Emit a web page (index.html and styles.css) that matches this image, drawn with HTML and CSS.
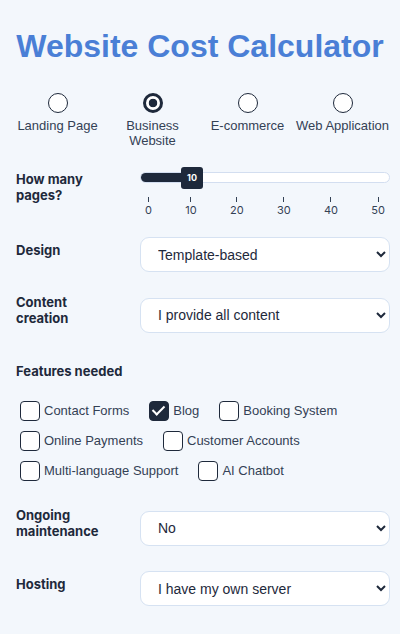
FILE: index.html
```html
<!DOCTYPE html>
<html lang="en">
<head>
    <meta charset="UTF-8">
    <meta name="viewport" content="width=device-width, initial-scale=1.0">
    <title>Website Cost Calculator</title>
    <link rel="stylesheet" href="styles.css">
</head>
<body>
    <div class="calculator">
        <h1>Website Cost Calculator</h1>

        <div class="site-types">
            <label class="site-type">
                <input type="radio" name="type" value="landing">
                <span>Landing Page</span>
            </label>
            <label class="site-type">
                <input type="radio" name="type" value="business" checked>
                <span>Business Website</span>
            </label>
            <label class="site-type">
                <input type="radio" name="type" value="ecommerce">
                <span>E-commerce</span>
            </label>
            <label class="site-type">
                <input type="radio" name="type" value="webapp">
                <span>Web Application</span>
            </label>
        </div>

        <div class="form">
            <div class="field field-slider">
                <div class="field-label">How many pages?</div>
                <div class="slider">
                    <div class="track">
                        <div class="track-fill" style="width: 45px"></div>
                        <div class="thumb" style="left: 40px">10</div>
                    </div>
                    <div class="ticks">
                        <div class="tick"><span class="mark"></span>0</div>
                        <div class="tick"><span class="mark"></span>10</div>
                        <div class="tick"><span class="mark"></span>20</div>
                        <div class="tick"><span class="mark"></span>30</div>
                        <div class="tick"><span class="mark"></span>40</div>
                        <div class="tick"><span class="mark"></span>50</div>
                    </div>
                </div>
            </div>

            <div class="field field-design">
                <div class="field-label">Design</div>
                <select class="select">
                    <option>Template-based</option>
                    <option>Custom design</option>
                </select>
            </div>

            <div class="field">
                <div class="field-label">Content creation</div>
                <select class="select">
                    <option>I provide all content</option>
                    <option>Need some help</option>
                    <option>Full content creation</option>
                </select>
            </div>

            <div class="features">
                <div class="field-label">Features needed</div>
                <div class="feature-list">
                    <label class="feature"><input type="checkbox"><span>Contact Forms</span></label>
                    <label class="feature"><input type="checkbox" checked><span>Blog</span></label>
                    <label class="feature"><input type="checkbox"><span>Booking System</span></label>
                    <label class="feature"><input type="checkbox"><span>Online Payments</span></label>
                    <label class="feature"><input type="checkbox"><span>Customer Accounts</span></label>
                    <label class="feature"><input type="checkbox"><span>Multi-language Support</span></label>
                    <label class="feature"><input type="checkbox"><span>AI Chatbot</span></label>
                </div>
            </div>

            <div class="field field-maintenance">
                <div class="field-label">Ongoing maintenance</div>
                <select class="select">
                    <option>No</option>
                    <option>Yes</option>
                </select>
            </div>

            <div class="field">
                <div class="field-label">Hosting</div>
                <select class="select">
                    <option>I have my own server</option>
                    <option>I need hosting</option>
                </select>
            </div>
        </div>
    </div>
</body>
</html>
```

FILE: styles.css
```css
body {
    margin: 0;
    background-color: #f3f7fc;
    color: #1e293b;
    font-family: "Liberation Sans", Arial, sans-serif;
}
.calculator {
    padding: 0 10px;
}
h1 {
    margin: 28px 0 29px;
    font-size: 32px;
    line-height: 36px;
    text-align: center;
    color: #4a7fd6;
}
.site-types {
    display: grid;
    grid-template-columns: repeat(4, 1fr);
}
.site-type {
    display: flex;
    flex-direction: column;
    align-items: center;
    text-align: center;
    font-size: 13px;
    line-height: 15px;
    color: #334155;
}
.site-type input {
    appearance: none;
    margin: 0 0 5px;
    width: 20px;
    height: 20px;
    border: 1.5px solid #1e293b;
    border-radius: 50%;
    background-color: white;
}
.site-type input:checked {
    border: 3px solid #1e293b;
    background: radial-gradient(circle, #1e293b 4px, white 4.6px);
}
.form {
    padding-left: 6px;
}
.field {
    display: grid;
    grid-template-columns: 100px 1fr;
    column-gap: 24px;
    align-items: center;
    margin-top: 22px;
}
.field-label {
    font-family: Inter, "Liberation Sans", sans-serif;
    font-weight: bold;
    font-size: 13px;
    line-height: 16px;
    padding-bottom: 10px;
}
.field-slider {
    margin-top: 18px;
}
.field-design {
    margin-top: 20px;
}
.slider {
    padding-top: 6px;
}
.track {
    position: relative;
    height: 11px;
    background-color: white;
    border: 1px solid #d3def0;
    border-radius: 6px;
    box-sizing: border-box;
}
.track-fill {
    height: 100%;
    background-color: #1e293b;
    border-radius: 6px 0 0 6px;
}
.thumb {
    position: absolute;
    top: -6.5px;
    width: 22px;
    height: 22px;
    border-radius: 3px;
    background-color: #1e293b;
    color: white;
    font-family: Inter, sans-serif;
    font-weight: bold;
    font-size: 9px;
    line-height: 22px;
    text-align: center;
}
.ticks {
    display: flex;
    justify-content: space-between;
    padding: 0 5px;
    margin-top: 14px;
}
.tick {
    display: flex;
    flex-direction: column;
    align-items: center;
    font-family: Inter, sans-serif;
    font-size: 11px;
    line-height: 13px;
    color: #334155;
}
.mark {
    width: 1px;
    height: 5px;
    margin-bottom: 2px;
    background-color: #334155;
}
.select {
    height: 35px;
    padding: 0 13px;
    background-color: white;
    border: 1px solid #d6e2f2;
    border-radius: 9px;
    font-family: "Liberation Sans", Arial, sans-serif;
    font-size: 14px;
    color: #1e293b;
}
.features {
    margin-top: 27px;
}
.features .field-label {
    padding-bottom: 0;
}
.feature-list {
    display: flex;
    flex-wrap: wrap;
    column-gap: 20px;
    row-gap: 10px;
    margin-top: 22px;
    padding-left: 4px;
}
.feature {
    display: flex;
    align-items: center;
    gap: 4px;
    font-size: 13px;
    line-height: 20px;
    color: #334155;
}
.feature input {
    appearance: none;
    position: relative;
    margin: 0;
    width: 20px;
    height: 20px;
    border: 1.5px solid #1e293b;
    border-radius: 4px;
    background-color: white;
}
.feature input:checked {
    background-color: #1e293b;
}
.feature input:checked::after {
    content: "";
    position: absolute;
    left: 5px;
    top: 1px;
    width: 5px;
    height: 10px;
    border: solid white;
    border-width: 0 2.5px 2.5px 0;
    transform: rotate(45deg);
}
.field-maintenance {
    margin-top: 26px;
}
```
